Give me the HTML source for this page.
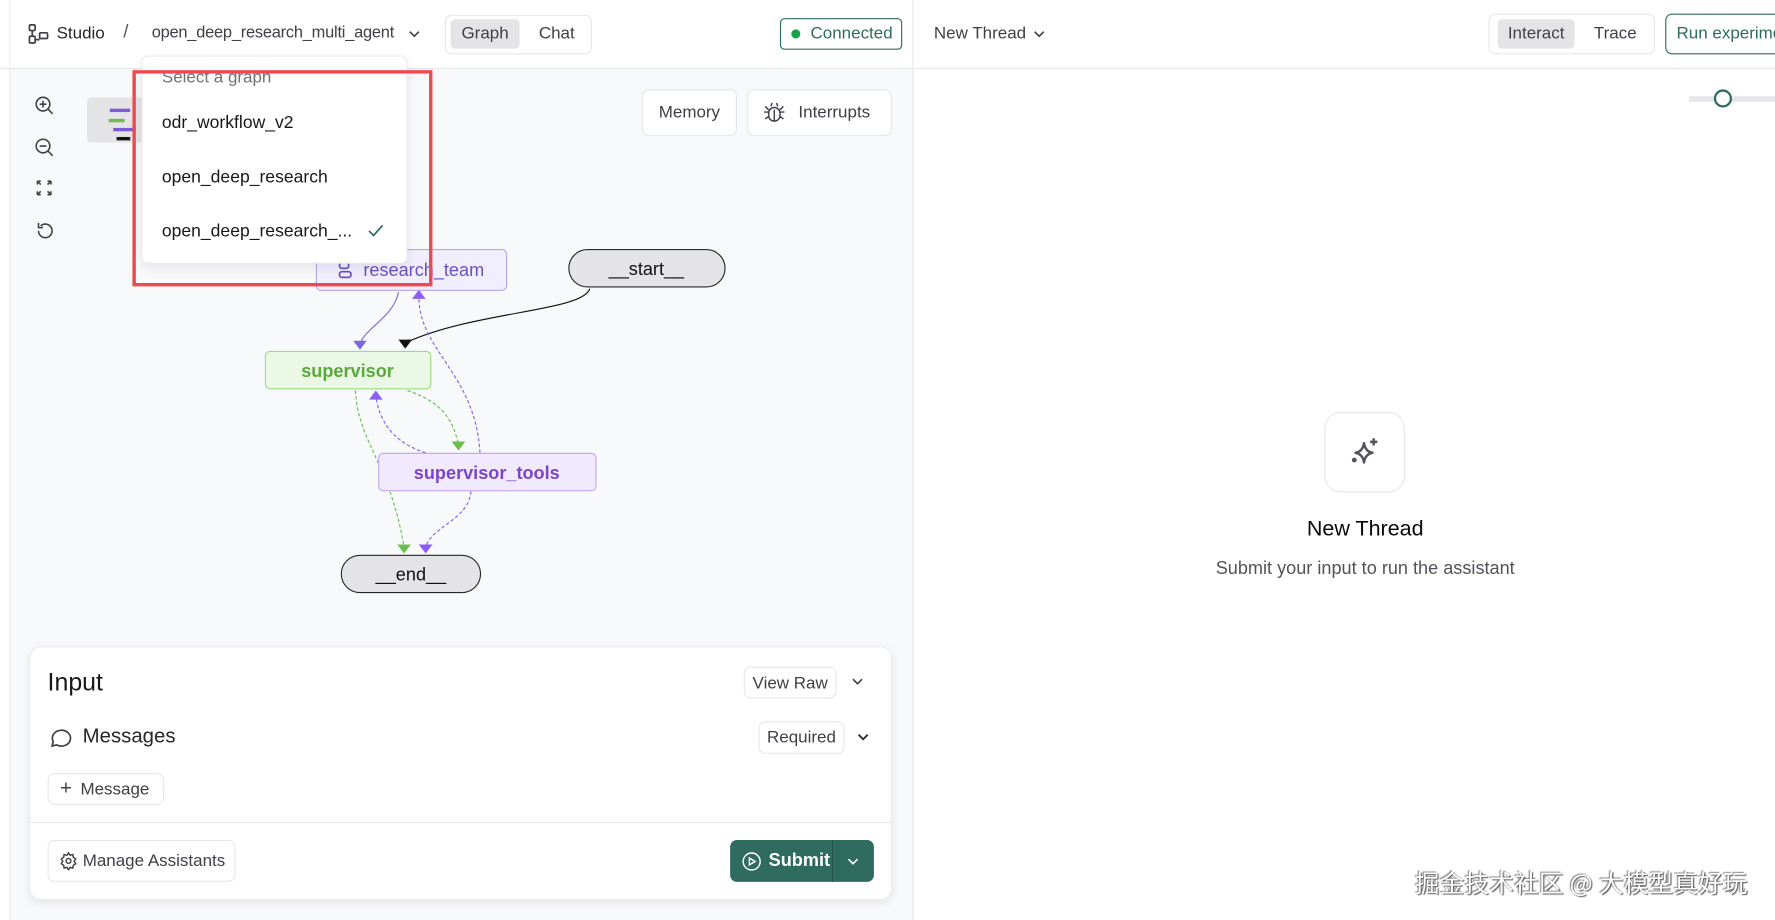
<!DOCTYPE html>
<html><head><meta charset="utf-8">
<style>
*{box-sizing:border-box;margin:0;padding:0}
html,body{width:1775px;height:920px;overflow:hidden;background:#fff}
#s{position:absolute;left:0;top:0;width:1568px;height:813px;transform:scale(1.13202);transform-origin:0 0;font-family:"Liberation Sans","Noto Sans CJK SC",sans-serif;color:#27272a}
.a{position:absolute}
.btn{position:absolute;border:1px solid #e5e7eb;border-radius:6px;background:#fff;display:flex;align-items:center;justify-content:center;font-size:15px;color:#3f3f46}
</style></head><body><div id="s">
<div class="a" style="left:8px;top:60px;width:798px;height:753px;background:#f8f9fb"></div>
<div class="a" style="left:8px;top:0;width:1px;height:813px;background:#eceef1"></div>
<div class="a" style="left:806px;top:0;width:1px;height:813px;background:#e5e7eb"></div>
<div class="a" style="left:0;top:60px;width:1568px;height:1px;background:#e5e7eb"></div>
<svg class="a" style="left:25px;top:21px" width="18" height="18" viewBox="0 0 18 18" fill="none" stroke="#3f3f46" stroke-width="1.5"><rect x="1" y="1" width="5" height="5" rx="1"/><rect x="10" y="8" width="7" height="5" rx="1"/><rect x="1" y="11" width="5" height="6" rx="1"/><path d="M3.5 6v5M6 14h4"/></svg>
<div class="a" style="left:50px;top:21px;font-size:15px;color:#27272a">Studio</div>
<div class="a" style="left:109px;top:20px;font-size:16px;color:#52525b">/</div>
<div class="a" style="left:134px;top:21px;font-size:14.5px;letter-spacing:-0.2px;color:#3f3f46">open_deep_research_multi_agent</div>
<svg class="a" style="left:360px;top:25px" width="12" height="10" viewBox="0 0 12 10"><path d="M2 3l4 4 4-4" fill="none" stroke="#3f3f46" stroke-width="1.4"/></svg>
<div class="a" style="left:393px;top:13px;width:130px;height:35px;border:1px solid #e5e7eb;border-radius:6px"></div>
<div class="a" style="left:398px;top:17px;width:61px;height:26px;background:#e4e4e7;border-radius:4px;font-size:15px;text-align:center;line-height:26px;color:#3f3f46">Graph</div>
<div class="a" style="left:476px;top:21px;font-size:15px;color:#3f3f46">Chat</div>
<div class="a" style="left:689px;top:16px;width:108px;height:28px;border:1px solid #2f6b5e;border-radius:4px;font-size:15px;color:#2f6b5e;line-height:26px;padding-left:26px">Connected</div>
<div class="a" style="left:699px;top:26px;width:8px;height:8px;border-radius:50%;background:#16a34a"></div>
<div class="a" style="left:825px;top:21px;font-size:15px;color:#3f3f46">New Thread</div>
<svg class="a" style="left:912px;top:25px" width="12" height="10" viewBox="0 0 12 10"><path d="M2 3l4 4 4-4" fill="none" stroke="#3f3f46" stroke-width="1.4"/></svg>
<div class="a" style="left:1315px;top:12px;width:147px;height:36px;border:1px solid #e5e7eb;border-radius:6px"></div>
<div class="a" style="left:1323px;top:17px;width:68px;height:26px;background:#e4e4e7;border-radius:4px;font-size:15px;text-align:center;line-height:26px;color:#3f3f46">Interact</div>
<div class="a" style="left:1408px;top:21px;font-size:15px;color:#3f3f46">Trace</div>
<div class="a" style="left:1471px;top:12px;width:120px;height:36px;border:1px solid #2f6b5e;border-radius:6px;font-size:15px;color:#2f6b5e;line-height:34px;padding-left:9px;white-space:nowrap">Run experiment</div>
<div class="a" style="left:1492px;top:85px;width:76px;height:5px;background:#e5e7eb"></div>
<div class="a" style="left:1514px;top:79px;width:16px;height:16px;border-radius:50%;border:2px solid #2f6b5e;background:#fff"></div>
<svg class="a" style="left:30px;top:84px" width="18" height="140" viewBox="0 0 18 140" fill="none" stroke="#3f3f46" stroke-width="1.4"><circle cx="8" cy="8" r="6"/><path d="M12.5 12.5l4 4M5 8h6M8 5v6"/><circle cx="8" cy="45" r="6"/><path d="M12.5 49.5l4 4M5 45h6"/><path d="M3 76l3 3M3 76h3M3 76v3M15 76l-3 3M15 76h-3M15 76v3M3 88l3-3M3 88h3M3 88v-3M15 88l-3-3M15 88h-3M15 88v-3"/><path d="M4 120a6 6 0 1 0 2-4.5M4 113v4h4"/></svg>
<div class="a" style="left:77px;top:86px;width:50px;height:40px;background:#e4e4e7;border-radius:3px"></div>
<div class="a" style="left:97px;top:96px;width:18px;height:3px;background:#7c5cd6"></div>
<div class="a" style="left:96px;top:105px;width:14px;height:3px;background:#6abf4b"></div>
<div class="a" style="left:100px;top:113px;width:20px;height:3px;background:#7c5cd6"></div>
<div class="a" style="left:103px;top:121px;width:12px;height:3px;background:#111"></div>
<div class="btn" style="left:567px;top:79px;width:84px;height:41px">Memory</div>
<div class="btn" style="left:660px;top:79px;width:128px;height:41px;padding-left:26px">Interrupts</div>
<svg class="a" style="left:674px;top:89px" width="20" height="20" viewBox="0 0 20 20" fill="none" stroke="#3f3f46" stroke-width="1.3"><rect x="5" y="6" width="10" height="12" rx="5"/><path d="M7 5l1-3M13 5l-1-3M10 8v10M1 10h4M15 10h4M2 16l3-2M18 16l-3-2M2 5l3 3M18 5l-3 3"/></svg>
<svg class="a" style="left:0;top:0" width="806" height="560">
<g fill="none" stroke-width="1">
<path d="M352 258C348 280 322 290 318 304" stroke="#7c6bd6"/>
<path d="M521 255C515 275 420 275 360 302" stroke="#111"/>
<path d="M424 400C420 330 370 310 370 262" stroke="#8b5cf6" stroke-dasharray="3 2"/>
<path d="M360 345C390 355 400 370 405 393" stroke="#6abf4b" stroke-dasharray="3 2"/>
<path d="M376 400C345 390 335 370 332 350" stroke="#8b5cf6" stroke-dasharray="3 2"/>
<path d="M314 345C316 390 345 410 357 484" stroke="#6abf4b" stroke-dasharray="3 2"/>
<path d="M416 434C414 460 380 465 376 484" stroke="#8b5cf6" stroke-dasharray="3 2"/>
</g>
<path d="M312 301h12l-6 8z" fill="#7c6bd6"/>
<path d="M352 300h12l-6 8z" fill="#111"/>
<path d="M364 264h12l-6-8z" fill="#8b5cf6"/>
<path d="M399 390h12l-6 8z" fill="#6abf4b"/>
<path d="M326 353h12l-6-8z" fill="#8b5cf6"/>
<path d="M351 481h12l-6 8z" fill="#6abf4b"/>
<path d="M370 481h12l-6 8z" fill="#8b5cf6"/>
<rect x="279.5" y="220.5" width="168" height="36" rx="4" fill="#f1efff" stroke="#b5a6f0"/>
<text x="321" y="244" font-size="16" fill="#6a4fc9" font-family="Liberation Sans">research_team</text>
<rect x="300" y="232" width="8" height="5" rx="2" fill="none" stroke="#6a4fc9" stroke-width="1.5"/><rect x="300" y="240" width="10" height="5" rx="2" fill="none" stroke="#6a4fc9" stroke-width="1.5"/>
<rect x="502.5" y="220.5" width="138" height="33" rx="16.5" fill="#e4e4e7" stroke="#27272a"/>
<text x="571" y="243" font-size="16" fill="#111" text-anchor="middle" font-family="Liberation Sans">__start__</text>
<rect x="234.5" y="310.5" width="146" height="33" rx="4" fill="#ecf8e6" stroke="#9bdc82"/>
<text x="307" y="333" font-size="16" font-weight="bold" fill="#5aa83c" text-anchor="middle" font-family="Liberation Sans">supervisor</text>
<rect x="334.5" y="400.5" width="192" height="33" rx="4" fill="#f1e9fd" stroke="#c7a8f3"/>
<text x="430" y="423" font-size="16" font-weight="bold" fill="#7b45c9" text-anchor="middle" font-family="Liberation Sans">supervisor_tools</text>
<rect x="301.5" y="490.5" width="123" height="33" rx="16.5" fill="#e4e4e7" stroke="#27272a"/>
<text x="363" y="513" font-size="16" fill="#111" text-anchor="middle" font-family="Liberation Sans">__end__</text>
</svg>
<div class="a" style="left:125px;top:49px;width:235px;height:184px;background:#fff;border:1px solid #ececee;border-radius:6px;box-shadow:0 4px 10px rgba(0,0,0,.08)"></div>
<div class="a" style="left:143px;top:60px;font-size:15px;color:#71717a">Select a graph</div>
<div class="a" style="left:143px;top:100px;font-size:15.5px;color:#18181b">odr_workflow_v2</div>
<div class="a" style="left:143px;top:148px;font-size:15.5px;color:#18181b">open_deep_research</div>
<div class="a" style="left:143px;top:196px;font-size:15.5px;color:#18181b">open_deep_research_...</div>
<svg class="a" style="left:325px;top:198px" width="14" height="12" viewBox="0 0 14 12"><path d="M1 6l4 4 8-9" fill="none" stroke="#2f6b5e" stroke-width="1.5"/></svg>
<div class="a" style="left:117px;top:62px;width:265px;height:191px;border:3px solid #f0484c"></div>
<div class="a" style="left:26px;top:571px;width:762px;height:224px;background:#fff;border:1px solid #ececee;border-radius:10px;box-shadow:0 3px 8px rgba(0,0,0,.08)"></div>
<div class="a" style="left:42px;top:590px;font-size:22px;color:#18181b">Input</div>
<div class="btn" style="left:657px;top:589px;width:82px;height:28px">View Raw</div>
<svg class="a" style="left:751px;top:597px" width="13" height="10" viewBox="0 0 12 10"><path d="M2 3l4 4 4-4" fill="none" stroke="#3f3f46" stroke-width="1.4"/></svg>
<svg class="a" style="left:42px;top:640px" width="22" height="22" viewBox="0 0 22 22"><path d="M4 19l1-4a8 7 0 1 1 3 3z" fill="none" stroke="#3f3f46" stroke-width="1.5"/></svg>
<div class="a" style="left:73px;top:640px;font-size:18px;color:#27272a">Messages</div>
<div class="btn" style="left:670px;top:637px;width:76px;height:29px">Required</div>
<svg class="a" style="left:756px;top:646px" width="13" height="10" viewBox="0 0 12 10"><path d="M2 3l4 4 4-4" fill="none" stroke="#27272a" stroke-width="1.6"/></svg>
<div class="btn" style="left:42px;top:683px;width:103px;height:28px;padding-left:16px">Message</div>
<div class="a" style="left:53px;top:686px;font-size:18px;color:#3f3f46">+</div>
<div class="a" style="left:27px;top:726px;width:760px;height:1px;background:#e5e7eb"></div>
<div class="btn" style="left:42px;top:742px;width:166px;height:37px;padding-left:22px">Manage Assistants</div>
<svg class="a" style="left:52px;top:752px" width="17" height="17" viewBox="0 0 24 24" fill="none" stroke="#3f3f46" stroke-width="1.8"><circle cx="12" cy="12" r="3"/><path d="M12 2l2 3 3.5-1 .5 3.5 3 2-2 3 2 3-3 2-.5 3.5-3.5-1-2 3-2-3-3.5 1-.5-3.5-3-2 2-3-2-3 3-2 .5-3.5 3.5 1z"/></svg>
<div class="a" style="left:645px;top:742px;width:127px;height:37px;background:#2f6b5e;border-radius:6px"></div>
<div class="a" style="left:735px;top:742px;width:1px;height:37px;background:#24574c"></div>
<svg class="a" style="left:655px;top:752px" width="18" height="18" viewBox="0 0 18 18" fill="none" stroke="#fff" stroke-width="1.3"><circle cx="9" cy="9" r="7.5"/><path d="M7 6v6l5-3z"/></svg>
<div class="a" style="left:679px;top:752px;font-size:16px;color:#fff;font-weight:bold">Submit</div>
<svg class="a" style="left:747px;top:756px" width="13" height="10" viewBox="0 0 12 10"><path d="M2 3l4 4 4-4" fill="none" stroke="#fff" stroke-width="1.4"/></svg>
<div class="a" style="left:1170px;top:364px;width:71px;height:71px;border:1px solid #e5e7eb;border-radius:14px"></div>
<svg class="a" style="left:1191px;top:385px" width="30" height="30" viewBox="0 0 28 28" fill="none" stroke="#52525b" stroke-width="2" stroke-linejoin="round"><path d="M13 6q1 7 7 8q-6 1-7 8q-1-7-7-8q6-1 7-8z"/><path d="M21 2v6M18 5h6"/><circle cx="5" cy="20" r="1" fill="#52525b"/></svg>
<div class="a" style="left:1080px;top:457px;width:252px;text-align:center;font-size:19px;color:#09090b">New Thread</div>
<div class="a" style="left:1030px;top:494px;width:352px;text-align:center;font-size:16px;color:#52525b">Submit your input to run the assistant</div>
<div class="a" style="left:1250px;top:764px;font-size:21.5px;letter-spacing:0.4px;color:#fff;text-shadow:1px 1px 1px #555,-1px -1px 1px #888;font-family:'Noto Sans CJK SC',sans-serif">掘金技术社区 @ 大模型真好玩</div>
</div></body></html>
